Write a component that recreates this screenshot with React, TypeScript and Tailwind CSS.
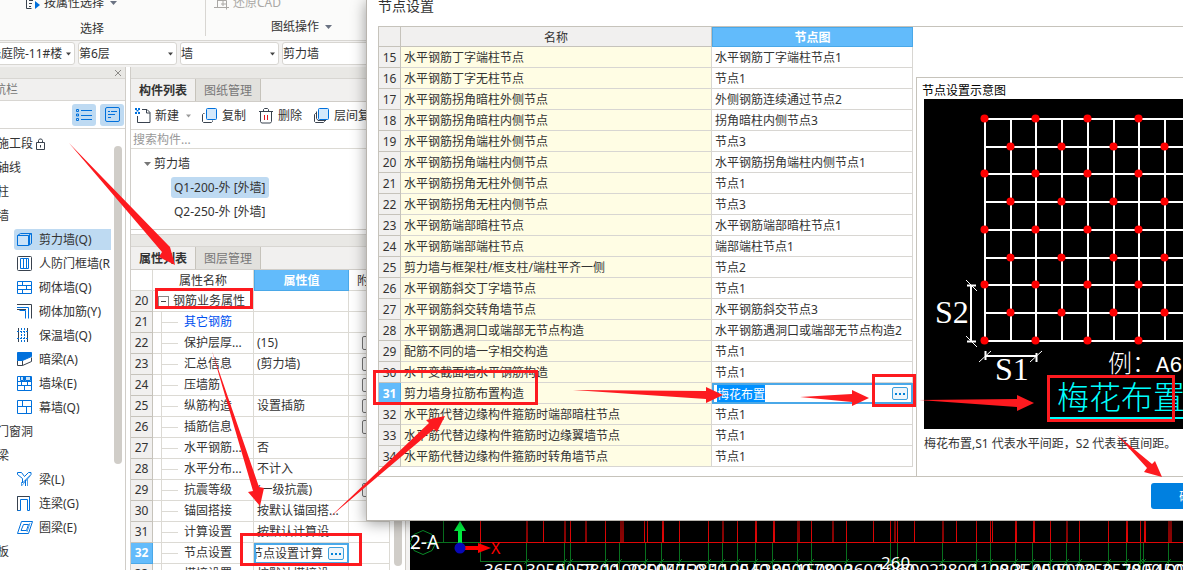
import React from 'react';

type IconName =
  | 'wall' | 'doorFrame' | 'masonry' | 'rebar' | 'insulation' | 'hiddenBeam'
  | 'pier' | 'curtain' | 'beam' | 'linkBeam' | 'ringBeam';

interface NavEntry {
  label: string;
  icon?: IconName;
  active?: boolean;
  locked?: boolean;
}

interface PropertyRow {
  no: number;
  name: string;
  value?: string;
  check?: boolean;
  group?: boolean;
  link?: boolean;
  editing?: boolean;
}

const navEntries: NavEntry[] = [
  { label: '施工段', locked: true },
  { label: '轴线' },
  { label: '柱' },
  { label: '墙' },
  { label: '剪力墙(Q)', icon: 'wall', active: true },
  { label: '人防门框墙(R', icon: 'doorFrame' },
  { label: '砌体墙(Q)', icon: 'masonry' },
  { label: '砌体加筋(Y)', icon: 'rebar' },
  { label: '保温墙(Q)', icon: 'insulation' },
  { label: '暗梁(A)', icon: 'hiddenBeam' },
  { label: '墙垛(E)', icon: 'pier' },
  { label: '幕墙(Q)', icon: 'curtain' },
  { label: '门窗洞' },
  { label: '梁' },
  { label: '梁(L)', icon: 'beam' },
  { label: '连梁(G)', icon: 'linkBeam' },
  { label: '圈梁(E)', icon: 'ringBeam' },
  { label: '板' },
];

const propertyRows: PropertyRow[] = [
  { no: 20, name: '钢筋业务属性', group: true },
  { no: 21, name: '其它钢筋', link: true },
  { no: 22, name: '保护层厚...', value: '(15)', check: true },
  { no: 23, name: '汇总信息', value: '(剪力墙)', check: true },
  { no: 24, name: '压墙筋', check: true },
  { no: 25, name: '纵筋构造', value: '设置插筋', check: true },
  { no: 26, name: '插筋信息', check: true },
  { no: 27, name: '水平钢筋...', value: '否' },
  { no: 28, name: '水平分布...', value: '不计入' },
  { no: 29, name: '抗震等级', value: '(一级抗震)', check: true },
  { no: 30, name: '锚固搭接', value: '按默认锚固搭...' },
  { no: 31, name: '计算设置', value: '按默认计算设' },
  { no: 32, name: '节点设置', value: '节点设置计算', editing: true },
  { no: 33, name: '搭接设置', value: '按默认搭接设' },
];

const nodeRows: [number, string, string][] = [
  [15, '水平钢筋丁字端柱节点', '水平钢筋丁字端柱节点1'],
  [16, '水平钢筋丁字无柱节点', '节点1'],
  [17, '水平钢筋拐角暗柱外侧节点', '外侧钢筋连续通过节点2'],
  [18, '水平钢筋拐角暗柱内侧节点', '拐角暗柱内侧节点3'],
  [19, '水平钢筋拐角端柱外侧节点', '节点3'],
  [20, '水平钢筋拐角端柱内侧节点', '水平钢筋拐角端柱内侧节点1'],
  [21, '水平钢筋拐角无柱外侧节点', '节点1'],
  [22, '水平钢筋拐角无柱内侧节点', '节点3'],
  [23, '水平钢筋端部暗柱节点', '水平钢筋端部暗柱节点1'],
  [24, '水平钢筋端部端柱节点', '端部端柱节点1'],
  [25, '剪力墙与框架柱/框支柱/端柱平齐一侧', '节点2'],
  [26, '水平钢筋斜交丁字墙节点', '节点1'],
  [27, '水平钢筋斜交转角墙节点', '水平钢筋斜交节点3'],
  [28, '水平钢筋遇洞口或端部无节点构造', '水平钢筋遇洞口或端部无节点构造2'],
  [29, '配筋不同的墙一字相交构造', '节点1'],
  [30, '水平变截面墙水平钢筋构造', '节点1'],
  [31, '剪力墙身拉筋布置构造', '梅花布置'],
  [32, '水平筋代替边缘构件箍筋时端部暗柱节点', '节点1'],
  [33, '水平筋代替边缘构件箍筋时边缘翼墙节点', '节点1'],
  [34, '水平筋代替边缘构件箍筋时转角墙节点', '节点1'],
];

const iconShapes: Record<IconName, React.ReactNode> = {
  wall: (
    <>
      <path d="M.5 3.500h11v10H.5z" fill="#c9e2f8" />
      <path d="M.5 3.500l3-2h11v10l-3 2M11.500 3.500l3-2M12.500 2.500v10.500" />
    </>
  ),
  doorFrame: (
    <>
      <rect x="0.5" y="0.5" width="14" height="14" rx="1" stroke="#39424e" />
      <path d="M3.500 2.500h8v10h-8zM6.500 2.500v10M9.500 2.500v10" />
    </>
  ),
  masonry: <path d="M.5 1.500h14v12h-14zM.5 5.500h14M.5 9.500h14M5.500 1.500v4M9.500 5.500v4M5.500 9.500v4" />,
  rebar: (
    <>
      <path d="M0 .5h14.500v14" stroke="#39424e" />
      <path d="M0 3.500h11.500v11M8.500 14.500v-8h-6" />
      <path d="M0 5.500h9" stroke="#39424e" />
    </>
  ),
  insulation: (
    <>
      <path d="M1.500 0v14M10.500 0v14" stroke="#39424e" />
      <path d="M4.500 0v14M7.500 0v14M0 3.500h12M0 10.500h12" strokeDasharray="2 1" />
    </>
  ),
  hiddenBeam: (
    <>
      <path d="M.5 8.500v5h5l9-4v-4" stroke="#39424e" />
      <path d="M5.500 8.500v5" stroke="#39424e" />
      <path d="M.5.5h14v4l-9 4h-5z" fill="#0070dc" />
    </>
  ),
  pier: (
    <>
      <path d="M3.500.5h3v4h-3zM8.500.5h5v4h-5z" fill="#c9e2f8" />
      <path d="M.5.5h14v14H.5zM.5 5.500h14M.5 9.500h14M7.500.5v5M4.500 5.500v4M10.500 5.500v4M7.500 9.500v5" />
    </>
  ),
  curtain: <path d="M.5.5h14v13H.5zM.5 6.500h14M5.500.5v6M9.500 6.500v7" />,
  beam: (
    <>
      <path d="M13.500 3.500l-9 10.500v-4M10.500 7v7" stroke="#4fa0ea" />
      <path d="M.5.5h4l3 4 4-4h2.500v2L5.500 11V6.500L.5 2.500zM8.500 8v6" />
    </>
  ),
  linkBeam: (
    <>
      <path d="M.5 14.500V.5h12v14h-2V3.500h-7v11z" />
      <path d="M.5 14.500V.5h12" stroke="#39424e" />
    </>
  ),
  ringBeam: (
    <>
      <path d="M4.500 1.500h11l-4 12H.5zM6.500 4.500h5l-2 6H4z" />
      <path d="M13 3l-3 9" stroke="#4fa0ea" />
    </>
  ),
};

const ComponentIcon = ({ name }: { name: IconName }) => (
  <svg width="16" height="15" fill="none" stroke="#0070dc" className="shrink-0">
    {iconShapes[name]}
  </svg>
);

const Caret = ({ className = '' }: { className?: string }) => (
  <svg width="7" height="4" viewBox="0 0 7 4" className={`shrink-0 ${className}`} fill="currentColor">
    <path d="M0 0h7L3.500 4z" />
  </svg>
);

const CopyIcon = ({ triple = false }: { triple?: boolean }) => (
  <svg width="16" height="16" fill="none" className="shrink-0">
    <path d="M2.500 5.500h-1l-1 1v7l1 1h8l1-1v-1" stroke="#39424e" />
    {triple && <path d="M2.500 3.500v7l1.500 2h8" stroke="#39424e" />}
    <rect x="4.500" y="0.5" width="10" height="11" rx="1" fill="#d5e9fb" stroke="#0070dc" />
  </svg>
);

const DotsButton = () => (
  <button
    type="button"
    aria-label="更多"
    className="flex h-[13px] w-4 shrink-0 items-center justify-center gap-[2px] rounded-[2px] border border-[#3e9fdc] bg-[#eef5fb]"
  >
    <i className="size-[2px] bg-[#0080d8]" />
    <i className="size-[2px] bg-[#0080d8]" />
    <i className="size-[2px] bg-[#0080d8]" />
  </button>
);

const Ribbon = () => (
  <header className="flex h-[41px] shrink-0 border-b border-[#d8d6d2] bg-[#fbfbfa]">
    <div className="flex h-9 w-[206px] shrink-0 flex-col border-r border-[#d8d6d2]">
      <button type="button" className="-mt-[5px] ml-[26px] flex h-4 items-center gap-[6px]">
        <svg width="14" height="14" fill="none">
          <path d="M5.500 1.500h-5v11h5M3 4.500h4M3 7.500h3M3 10.500h2" stroke="#39424e" />
          <path d="M9 5v8l5-4z" fill="#0070dc" />
        </svg>
        <span className="-ml-[2px]">按属性选择</span>
        <Caret className="text-gray-500" />
      </button>
      <div className="mt-[10px] ml-20 leading-4">选择</div>
    </div>
    <div className="flex flex-col">
      <button type="button" disabled className="-mt-[5px] ml-2 flex h-4 items-center gap-1 text-[#aaa8a5]">
        <svg width="15" height="14" fill="none" stroke="#aaa8a5">
          <path d="M3.500 2v9M0 11.500h15M3.500 4.500h9v9M9 5v5M7 8h5" />
        </svg>
        还原CAD
      </button>
      <button type="button" className="mt-2 ml-[65px] flex h-4 items-center gap-[6px]">
        图纸操作
        <Caret className="text-gray-500" />
      </button>
    </div>
  </header>
);

const Picker = ({ label, value, className }: { label: string; value: string; className: string }) => (
  <div className={`relative shrink-0 ${className}`}>
    <select
      aria-label={label}
      defaultValue={value}
      className="h-[23px] w-full appearance-none overflow-hidden rounded-[3px] border border-[#d8d6d2] bg-white pr-3 text-[#333]"
    >
      <option>{value}</option>
    </select>
    <Caret className="pointer-events-none absolute top-[10px] right-1 w-[5px] text-[#444]" />
  </div>
);

const NavPanel = () => (
  <nav className="flex w-[126px] shrink-0 flex-col overflow-hidden border-r border-[#d0cdc8] bg-white">
    <div className="flex h-3 shrink-0 items-center justify-end border-b border-[#d8d6d2] bg-[#e9e8e5] pr-[3px]">
      <button type="button" aria-label="关闭" className="flex">
        <svg width="8" height="8" stroke="#8c8a87">
          <path d="M1 1l6 6M7 1L1 7" />
        </svg>
      </button>
    </div>
    <h2 className="-ml-[18px] h-[22px] shrink-0 border-b border-[#d8d6d2] bg-[#f1f0ef] leading-[22px] text-[#777]">导航栏</h2>
    <div className="flex h-7 shrink-0 items-center justify-end gap-1 border-b border-[#d8d6d2] pr-px">
      <button type="button" aria-label="列表" className="flex h-[22px] w-6 items-center justify-center rounded-[3px] bg-[#bedaf2]">
        <svg width="16" height="14" fill="none" stroke="#0070dc">
          <path d="M.5 1.500h2v2h-2zM.5 6h2v2h-2zM.5 10.500h2v2h-2zM5 2.500h11M5 7.500h11M5 11.500h11" />
        </svg>
      </button>
      <button type="button" aria-label="详情" className="flex h-[22px] w-6 items-center justify-center rounded-[3px] bg-[#bedaf2]">
        <svg width="15" height="15" fill="none" stroke="#0070dc">
          <rect x="0.5" y="0.5" width="14" height="14" rx="1.500" />
          <path d="M3 4.500h2M6 4.500h6M3 7.500h7M3 10.500h3" />
        </svg>
      </button>
    </div>
    <div className="flex min-h-0 flex-1">
      <ul className="min-w-0 flex-1 pt-[2px]">
        {navEntries.map((entry) => (
          <li key={entry.label} className="flex h-6 items-center">
            {entry.icon ? (
              <a
                href="#"
                className={`ml-[14px] flex h-[21px] w-[97px] items-center overflow-hidden rounded-l-[3px] pl-[3px] whitespace-nowrap ${entry.active ? 'bg-[#bedaf2]' : ''}`}
              >
                <ComponentIcon name={entry.icon} />
                <span className="ml-[6px] pt-[2px]">{entry.label}</span>
              </a>
            ) : (
              <a href="#" className="-ml-[3px] flex items-center gap-[3px] pt-[2px]">
                {entry.label}
                {entry.locked && (
                  <svg width="10" height="12" fill="none" stroke="#39424e">
                    <path d="M.5 4.500h8v7h-8zM2.500 4.500v-2l1-1.500h2l1 1.500v2M4.500 7v2.500" />
                  </svg>
                )}
              </a>
            )}
          </li>
        ))}
      </ul>
      <div className="mt-[17px] mr-[3px] h-[318px] w-2 shrink-0 rounded-full bg-[#d0cdc8]" />
    </div>
  </nav>
);

const Tabs = ({ active, other }: { active: string; other: string }) => (
  <div role="tablist" className="flex h-[23px] shrink-0 border-b border-[#d0cdc8] bg-[#f1f0ef]">
    <button role="tab" aria-selected="true" type="button" className="w-[65px] border-r border-[#c6c3bb] pt-[2px] font-bold">
      {active}
    </button>
    <button role="tab" aria-selected="false" type="button" className="w-[65px] border-r border-[#c6c3bb] bg-[#e2e1dd] pt-[2px] text-[#777]">
      {other}
    </button>
  </div>
);

const ComponentList = () => (
  <section className="flex flex-col">
    <div className="h-3 border-b border-[#d8d6d2] bg-[#e9e8e5]" />
    <Tabs active="构件列表" other="图纸管理" />
    <div className="flex h-[27px] items-center pt-px pl-1 whitespace-nowrap">
      <button type="button" className="flex w-[67px] items-center gap-1">
        <svg width="16" height="16" fill="none">
          <path d="M0 0h2v2H0zM3 0h2v2H3zM1.500 2h2v1.500h-2zM0 4h2v2H0zM3 4h2v2H3z" fill="#0070dc" />
          <path d="M7 1.500h5l3 3v10H2.500V8M11.500 1.500V5H15" stroke="#39424e" />
        </svg>
        新建
        <Caret className="ml-[3px] w-[5px] text-[#999]" />
      </button>
      <button type="button" className="flex w-[57px] items-center gap-1">
        <CopyIcon />
        复制
      </button>
      <button type="button" className="flex w-[55px] items-center gap-1">
        <svg width="15" height="16" fill="none" stroke="#39424e">
          <path d="M0 3.500h14M4.500 3.500v-2l1-1h3l1 1v2M1.500 3.500v10l1 1.500h9l1-1.500v-10" />
          <path d="M5.500 7v5M8.500 7v5" stroke="#e8131b" />
        </svg>
        删除
      </button>
      <button type="button" className="flex items-center gap-1">
        <CopyIcon triple />
        层间复制
      </button>
    </div>
    <input
      aria-label="搜索构件"
      placeholder="搜索构件..."
      className="h-5 border-y border-[#dcdad4] pt-px pl-[2px] placeholder:text-[#999]"
    />
    <ul className="h-[81px] border-b border-[#d0cdc8] pt-[2px] leading-6">
      <li>
        <button type="button" className="ml-[13px] flex h-6 items-center gap-[3px] pt-px">
          <Caret className="text-[#777]" />
          剪力墙
        </button>
      </li>
      <li className="ml-10 flex h-6 items-center">
        <a href="#" className="rounded-[3px] bg-[#bedaf2] px-[3px] leading-[21px]">Q1-200-外 [外墙]</a>
      </li>
      <li className="ml-10 flex h-6 items-center">
        <a href="#" className="px-[3px] leading-[21px]">Q2-250-外 [外墙]</a>
      </li>
    </ul>
  </section>
);

const PropertyTable = () => (
  <table className="w-[259px] table-fixed border-separate border-spacing-0 text-left whitespace-nowrap">
    <colgroup>
      <col className="w-[22px]" />
      <col className="w-[101px]" />
      <col className="w-[95px]" />
      <col className="w-[41px]" />
    </colgroup>
    <thead>
      <tr>
        <th className="h-[21px] border-r border-b border-[#dcdad4] p-0" />
        <th className="border-r border-b border-[#dcdad4] p-0 pt-px text-center font-normal">属性名称</th>
        <th className="border border-t-0 border-[#4aa8e8] bg-[#62bbfb] p-0 pt-px text-center font-bold text-white">属性值</th>
        <th className="border-r border-b border-[#dcdad4] p-0 pt-px text-center font-normal">附加</th>
      </tr>
    </thead>
    <tbody>
      {propertyRows.map((row) => (
        <tr key={row.no}>
          <th
            className={`h-[21px] border-r border-b p-0 text-center ${row.editing ? 'border-[#4aa8e8] bg-[#62bbfb] font-bold text-white' : 'border-[#c6c3bb] bg-[#f1f0ef] font-normal'}`}
          >
            {row.no}
          </th>
          <td className="border-r border-b border-[#dcdad4] p-0">
            {row.group ? (
              <div className="flex items-center gap-1 pl-[5px]">
                <button type="button" aria-label="折叠" className="flex size-[11px] items-center justify-center border border-[#888]">
                  <i className="h-px w-[5px] bg-[#444]" />
                </button>
                {row.name}
              </div>
            ) : (
              <div className="flex h-5 items-center">
                <div className="ml-2 h-5 w-px bg-[#dcdad4]" />
                <div className="mr-[6px] h-px w-4 bg-[#dcdad4]" />
                <span className={row.link ? 'text-[#0050f0]' : ''}>{row.name}</span>
              </div>
            )}
          </td>
          {row.editing ? (
            <td className="border-2 border-[#4aa8e8] p-0">
              <div className="flex items-center gap-[5px]">
                <div className="flex w-[67px] justify-end overflow-hidden">
                  <input aria-label={row.name} defaultValue={row.value} className="h-4 w-[72px] shrink-0 outline-none" />
                </div>
                <DotsButton />
              </div>
            </td>
          ) : (
            <td className="overflow-hidden border-r border-b border-[#dcdad4] p-0 pl-[3px]">{row.value}</td>
          )}
          <td className="border-r border-b border-[#dcdad4] p-0">
            {row.check && (
              <input
                type="checkbox"
                aria-label={`附加 ${row.name}`}
                className="mx-auto block size-[14px] appearance-none rounded-[2px] border border-[#777] bg-white"
              />
            )}
          </td>
        </tr>
      ))}
    </tbody>
  </table>
);

const redLines: [number, number][] = [
  [70, 1], [133, 1], [160, 1], [195, 1], [234, 1], [237, 1], [252, 2], [269, 1], [298, 1], [327, 1], [345, 2],
  [363, 2], [401, 1], [436, 1], [463, 1], [480, 1], [487, 1], [504, 1], [546, 1], [566, 1], [580, 1], [582, 1],
  [605, 2], [623, 2], [640, 1], [669, 1], [698, 1], [716, 2], [730, 1], [734, 2],
];
const darkLines: [number, number][] = [
  [116, 2], [154, 2], [175, 2], [210, 4], [312, 2], [387, 3], [422, 2], [484, 2], [532, 2], [656, 2], [758, 4],
];
const greenLines = [
  116, 154, 160, 195, 209, 235, 251, 269, 298, 312, 327, 345, 362, 387, 401, 436, 480, 487, 532, 566, 580, 605,
  622, 640, 656, 669, 698, 716, 730, 733, 758,
];
const spans: [number, string][] = [
  [74, '3650'], [116, '3050'], [146, '5057'], [170, '2800'], [192, '1100'], [218, '2800'], [236, '5050'],
  [256, '4750'], [278, '2850'], [300, '1100'], [320, '2540'], [342, '5280'], [362, '0500'], [386, '1500'],
  [404, '7800'], [434, '3600'], [466, '1960'], [490, '6002'], [528, '2800'], [560, '1100'], [580, '2805'],
  [602, '3540'], [622, '0590'], [646, '5000'], [664, '2350'], [692, '3570'], [712, '2800'], [734, '5450'], [756, '00000'],
];

const DrawingCanvas = () => (
  <div className="flex min-w-0 flex-1 flex-col justify-end overflow-hidden bg-black">
    <svg width="100%" height="49" className="shrink-0">
      <path d="M33.500 0v21M15 21.500h55M70.500 21v19M70 40.500h2000" stroke="#08701e" />
      {greenLines.map((x) => (
        <path key={x} d={`M${x + 0.5} 21v28M${x - 2} 43l5-5`} stroke="#08701e" />
      ))}
      {darkLines.map(([x, w]) => (
        <rect key={x} x={x} y="0" width={w} height="21" fill="#8c0404" />
      ))}
      {redLines.map(([x, w]) => (
        <rect key={x} x={x} y="0" width={w} height="21" fill="#e00606" />
      ))}
      <path d="M70 21.500h2000" stroke="#e00606" />
      <path d="M13 9.500l9 4 4 8-4 8-9 4-9-4-4-8 4-8z" fill="none" stroke="#0a8a28" />
      <text x="0" y="28" fontSize="19" fill="#fff">2-A</text>
      <path d="M50 8v16" stroke="#00f040" strokeWidth="4" />
      <path d="M50 0l6 10H44z" fill="#00f040" />
      <path d="M55 27h14" stroke="#f00" strokeWidth="4" />
      <path d="M68 22v10l13-5z" fill="#f00" />
      <circle cx="50" cy="27" r="5.500" fill="#0808b8" />
      <text x="81" y="33" fontSize="16" fill="#f00">X</text>
      <g fontSize="17" fill="#fff">
        {spans.map(([x, label]) => (
          <text key={x} x={x} y="55">{label}</text>
        ))}
        <text x="471" y="48">260</text>
      </g>
    </svg>
  </div>
);

const gridX = [61, 87, 112, 138, 164, 190, 215, 241, 267];
const gridY = [20, 48, 75, 103, 131, 159, 186, 214, 242];

const NodeDiagram = () => (
  <svg width="100%" height="330" className="block bg-black" stroke="#fff" strokeWidth="2" fill="none">
    {gridX.map((x) => (
      <path key={x} d={`M${x} 20v222`} />
    ))}
    {gridY.map((y) => (
      <path key={y} d={`M61 ${y}h300`} />
    ))}
    {gridY.map((y, row) =>
      gridX
        .filter((_, col) => col % 2 === row % 2)
        .map((x) => <circle key={`${x}-${y}`} cx={x - 0.5} cy={y - 0.5} r="4" fill="#f00" stroke="none" />)
    )}
    <path d="M47 186v56M61 257h51" />
    <path d="M43 186.500h9M43 242.500h9M61.500 252v9M112.500 254v9" />
    <path d="M42 181l11 11M42 237l11 11M55 263l12-11M106 263l12-11" strokeWidth="1" />
    <g fill="#fff" stroke="none" className="font-['Liberation_Serif','Noto_Sans_CJK_SC',serif]">
      <text x="11" y="224" fontSize="32">S2</text>
      <text x="71" y="281" fontSize="32">S1</text>
      <text x="184" y="273" fontSize="24" className="font-light">例：</text>
    </g>
    <text x="232" y="273" fontSize="22" fill="#fff" stroke="none" className="font-['Liberation_Mono',monospace]">A600</text>
    <text x="133" y="310" fontSize="32" fill="#0ff" stroke="none" className="font-light">梅花布置</text>
    <path d="M126 319h300" stroke="#0ff" />
  </svg>
);

const NodeTable = () => (
  <table className="w-[534px] shrink-0 table-fixed border-separate border-spacing-0 text-left">
    <colgroup>
      <col className="w-[22px]" />
      <col className="w-[311px]" />
      <col className="w-[201px]" />
    </colgroup>
    <thead>
      <tr className="bg-[#f1f0ef]">
        <th className="h-5 border-r border-b border-[#c6c3bb] p-0" />
        <th className="border-r border-b border-[#c6c3bb] p-0 pt-[2px] text-center font-normal">名称</th>
        <th className="border border-[#4aa8e8] bg-[#62bbfb] p-0 pt-px text-center font-bold text-white">节点图</th>
      </tr>
    </thead>
    <tbody>
      {nodeRows.map(([no, name, value]) => {
        const editing = no === 31;
        return (
          <tr key={no}>
            <th
              className={`h-[21px] border-r border-b p-0 pt-[2px] text-center ${editing ? 'border-[#4aa8e8] bg-[#62bbfb] font-bold text-white' : 'border-[#c6c3bb] bg-[#f1f0ef] font-normal'}`}
            >
              {no}
            </th>
            <td className="border-r border-b border-[#d8d6d2] bg-[#fffde4] p-0 pt-[2px] pl-[3px]">{name}</td>
            {editing ? (
              <td className="border-2 border-[#4aa8e8] bg-white p-0">
                <div className="flex items-center justify-between pr-[3px] pl-[3px]">
                  <input
                    aria-label={name}
                    defaultValue={value}
                    className="h-[17px] w-12 bg-[#0090ff] text-white outline-none"
                  />
                  <DotsButton />
                </div>
              </td>
            ) : (
              <td className="border-r border-b border-[#d8d6d2] bg-white p-0 pt-[2px] pl-[3px]">{value}</td>
            )}
          </tr>
        );
      })}
    </tbody>
  </table>
);

const NodeDialog = () => (
  <div
    role="dialog"
    aria-label="节点设置"
    className="absolute top-0 -right-16 left-[366px] border-b border-l border-[#b8b4ae] bg-white shadow-[0_2px_14px_rgba(0,0,0,0.4)]"
  >
    <h1 className="-mt-1 mb-[10px] ml-[11px] h-5 text-sm leading-5">节点设置</h1>
    <div className="ml-[11px] flex border border-[#c6c3bb]">
      <div className="pb-[9px]">
        <NodeTable />
      </div>
      <section className="mt-[50px] ml-[3px] min-w-0 flex-1 border-t border-l border-[#c6c3bb]">
        <h2 className="h-[21px] pl-[5px] leading-[26px] text-black">节点设置示意图</h2>
        <div className="ml-[7px]">
          <NodeDiagram />
          <p className="pt-[7px] leading-4">梅花布置,S1 代表水平间距，S2 代表垂直间距。</p>
        </div>
      </section>
    </div>
    <footer className="flex h-[43px] justify-end pt-[6px] pr-4">
      <button type="button" className="h-[26px] w-20 rounded-[3px] bg-[#0080e0] pt-px text-white">确定</button>
    </footer>
  </div>
);

// Red call-outs drawn over everything to walk through the steps
const Annotations = () => (
  <svg width="100%" height="100%" className="pointer-events-none absolute inset-0" fill="#fd1a1f">
    <g fill="none" stroke="#fd1a1f" strokeWidth="3">
      <rect x="156.500" y="289.500" width="95" height="18" />
      <rect x="241.500" y="534.500" width="119" height="30" />
      <rect x="374.500" y="371.500" width="162" height="32" />
      <rect x="873.500" y="375.500" width="41" height="30" />
      <rect x="1048.500" y="376.500" width="125" height="44" />
    </g>
    <path d="M69 143l99 102 2 2 5 18-16-8 3-5z" />
    <path d="M212 351l47 136 5 1-4 18-12-14 5-1z" />
    <path d="M330 517l99-94-3-3 19-4-8 16-3-3z" />
    <path d="M573 390l133 1v-4l17 8-17 8v-4z" />
    <path d="M800 397l52-3v-4l17 8-17 8v-4z" />
    <path d="M919 400l98-1v-4l17 8-17 8v-4z" />
    <path d="M1117 435l35 29 3-3 7 16-18-5 3-4z" />
  </svg>
);

export default function App() {
  return (
    <div className="relative flex h-screen w-full flex-col overflow-hidden bg-[#f3f2f1] font-['Noto_Sans','Noto_Sans_CJK_SC',sans-serif] text-xs leading-4 text-[#333]">
      <Ribbon />
      <div className="-ml-4 flex h-[26px] shrink-0 items-start gap-[3px] pt-px">
        <Picker label="楼栋" value="浅庭院-11#楼" className="w-[91px] [&>select]:pl-1" />
        <Picker label="楼层" value="第6层" className="w-[99px]" />
        <Picker label="构件类型" value="墙" className="w-[99px]" />
        <Picker label="构件" value="剪力墙" className="w-[99px]" />
      </div>
      <div className="flex min-h-0 flex-1 bg-white">
        <NavPanel />
        <main className="ml-1 flex w-[276px] shrink-0 flex-col overflow-hidden border-x border-[#d0cdc8]">
          <ComponentList />
          <div className="mt-1 h-[13px] shrink-0 border-y border-[#d8d6d2] bg-[#e9e8e5]" />
          <Tabs active="属性列表" other="图层管理" />
          <div className="flex min-h-0 flex-1">
            <PropertyTable />
            <div className="mb-1 ml-1 w-2 shrink-0 rounded-full bg-[#d0cdc8]" />
          </div>
        </main>
        <div className="w-1 shrink-0 bg-[#f3f2f1]" />
        <DrawingCanvas />
      </div>
      <NodeDialog />
      <Annotations />
    </div>
  );
}
